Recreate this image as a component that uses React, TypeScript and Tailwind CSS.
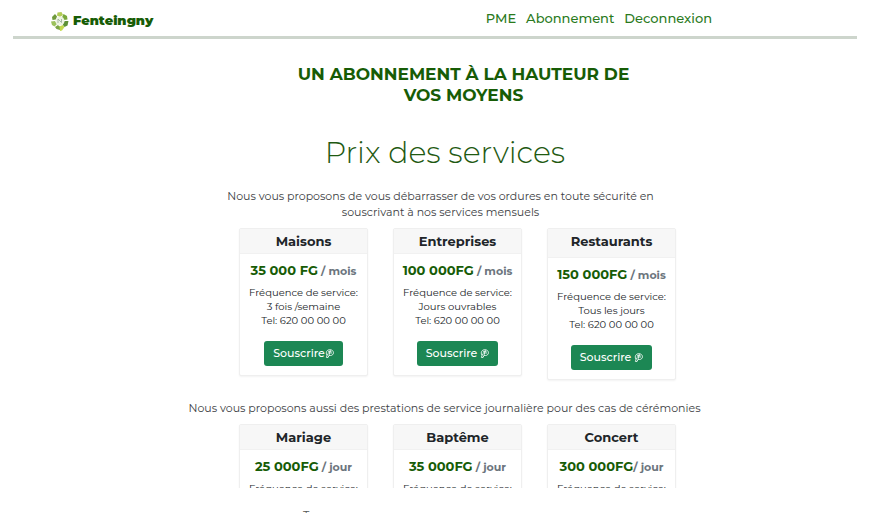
import type { ReactNode } from "react";

type Offer = {
  name: string;
  price: string;
  unit: string;
  lines: string[];
  action: ReactNode;
  tall?: boolean;
};

function PayIcon() {
  return (
    <svg viewBox="0 0 16 16" className="h-[9px] w-[9px] shrink-0" fill="none" stroke="currentColor" strokeWidth="1.5" aria-hidden="true">
      <path d="M3.500 11C.5 6 3.500 1.200 8.500 1.200c4 0 6.500 2.500 6.500 5.500 0 3-2.500 4.800-5 4.800H7L5.500 15H2.500L4.500 8.500" />
      <path d="M5.500 4.200h6M5 7h7.500M9.500 2 7 11" />
    </svg>
  );
}

function Logo() {
  return (
    <svg viewBox="0 0 40 40" className="h-5 w-5 shrink-0" aria-hidden="true">
      <path d="M15 3l8-1 3 6-6 4-6-3z" fill="#b3cc55" />
      <path d="M4 12l6-6 4 5-2 6-7 1z" fill="#6f9a3b" />
      <path d="M27 6l7 4 1 7-7 1-4-5z" fill="#79a83b" />
      <path d="M2 21l8-1 4 6-5 5-5-3z" fill="#9cc15c" />
      <path d="M29 20l8 0-2 9-6 3-4-5z" fill="#5d9136" />
      <path d="M10 32l6-4 5 4-1 6-7-2z" fill="#7ba545" />
      <path d="M19 31l6-3 4 4-5 7-4 1z" fill="#c3da4c" />
      <circle cx="20" cy="20" r="9" fill="#eef4e2" />
      <path d="M16 24v-8l7 7v-7" fill="none" stroke="#9db39d" strokeWidth="1.8" />
    </svg>
  );
}

const monthly: Offer[] = [
  { name: "Maisons", price: "35 000 FG", unit: " / mois", lines: ["3 fois /semaine", "Tel: 620 00 00 00"], action: "Souscrire" },
  { name: "Entreprises", price: "100 000FG", unit: " / mois", lines: ["Jours ouvrables", "Tel: 620 00 00 00"], action: "Souscrire\u00a0" },
  { name: "Restaurants", price: "150 000FG", unit: " / mois", lines: ["Tous les jours", "Tel: 620 00 00 00"], action: "Souscrire\u00a0", tall: true },
];

const daily: Offer[] = [
  { name: "Mariage", price: "25 000FG", unit: " / jour", lines: [], action: "Souscrire" },
  { name: "Baptême", price: "35 000FG", unit: " / jour", lines: [], action: "Souscrire" },
  { name: "Concert", price: "300 000FG", unit: "/ jour", lines: [], action: "Souscrire" },
];

function OfferCard({ offer }: { offer: Offer }) {
  return (
    <article className="rounded-xs border border-[#efefef] bg-white text-center shadow-xs">
      <h3 className={`border-b border-[#f1f1f1] bg-[#f7f7f7] text-[13px] leading-6 font-bold text-[#212529] ${offer.tall ? "pb-1" : ""}`}>
        {offer.name}
      </h3>
      <div className="flex flex-col items-center pt-2 pb-[9px]">
        <p className="text-[13px] leading-4 font-bold whitespace-pre text-[#175c06]">
          {offer.price}
          <span className="text-[11px] leading-none font-bold text-[#6c757d]">{offer.unit}</span>
        </p>
        <p className="mt-2 text-[10px] leading-[14px] text-[#212529]">
          Fréquence de service:
          {offer.lines.map((line) => (
            <span key={line} className="block">{line}</span>
          ))}
        </p>
        {offer.lines.length > 0 && (
          <button type="button" className="mt-[13px] flex h-[25px] items-center rounded-[3px] bg-[#1c8754] px-[9px] text-[11px] font-medium text-white">
            {offer.action}
            <PayIcon />
          </button>
        )}
      </div>
    </article>
  );
}

export default function App() {
  return (
    <div className="h-screen overflow-hidden bg-white pr-[17px] pl-[13px] font-['Montserrat','Inter',sans-serif]">
      <header className="flex h-[39px] items-center justify-between border-b-3 border-[#cdd5cc] pr-[145px] pl-[37px]">
        <a href="#accueil" className="flex items-center gap-[3px] pt-[6px] text-[13px] font-black text-[#175c06]">
          <Logo />
          Fenteingny
        </a>
        <nav className="flex gap-[10px] pt-[2px] text-[13px] font-medium text-[#2a7a1c]">
          <a href="#pme">PME</a>
          <a href="#abonnement">Abonnement</a>
          <a href="#deconnexion">Deconnexion</a>
        </nav>
      </header>
      <main>
        <h1 className="pt-[25px] pl-[57px] text-center text-[17px] leading-[21px] font-bold text-[#175c06]">
          UN ABONNEMENT À LA HAUTEUR DE
          <br />
          VOS MOYENS
        </h1>
        <h2 className="mt-[27px] pl-5 text-center text-[30px] leading-10 font-light text-[#1f5a12]">Prix des services</h2>
        <p className="mt-[15px] pl-[11px] text-center text-[11px] leading-4 text-[#3c4043]">
          Nous vous proposons de vous débarrasser de vos ordures en toute sécurité en
          <br />
          souscrivant à nos services mensuels
        </p>
        <section className="mt-2 flex justify-center pl-[45px]" aria-label="Services mensuels">
          <div className="grid grid-cols-[repeat(3,129px)] items-start gap-[25px]">
            {monthly.map((offer) => (
              <OfferCard key={offer.name} offer={offer} />
            ))}
          </div>
        </section>
        <p className="mt-5 pl-[19px] text-center text-[11px] leading-4 text-[#3c4043]">
          Nous vous proposons aussi des prestations de service journalière pour des cas de cérémonies
        </p>
        <section className="mt-2 flex h-16 justify-center overflow-hidden pl-[45px]" aria-label="Services journaliers">
          <div className="grid grid-cols-[repeat(3,129px)] items-start gap-[25px]">
            {daily.map((offer) => (
              <OfferCard key={offer.name} offer={offer} />
            ))}
          </div>
        </section>
        <p className="mt-[19px] pl-[290px] text-[11px] leading-4 text-[#555555]">T</p>
      </main>
    </div>
  );
}
